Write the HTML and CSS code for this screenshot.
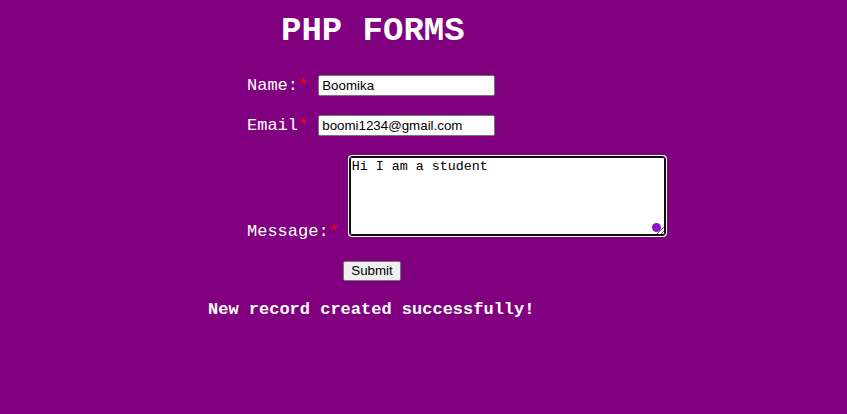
FILE: index.html
```html
<!DOCTYPE html>
<html>
<head>
<meta charset="utf-8">
<link rel="stylesheet" href="styles.css">
</head>
<body>
<div class="page">
  <h1 class="title">PHP FORMS</h1>
  <form class="form">
    <div class="row">
      <label class="label">Name:<span class="req">*</span></label>
      <input class="field" type="text" value="Boomika">
    </div>
    <div class="row">
      <label class="label">Email<span class="req">*</span></label>
      <input class="field" type="text" value="boomi1234@gmail.com">
    </div>
    <div class="row row-end">
      <label class="label label-msg">Message:<span class="req">*</span></label>
      <span class="area-wrap">
        <textarea class="area">Hi I am a student</textarea>
        <span class="dot"></span>
      </span>
    </div>
    <div class="row row-btn">
      <button class="btn" type="button">Submit</button>
    </div>
  </form>
  <p class="success">New record created successfully!</p>
</div>
</body>
</html>
```

FILE: styles.css
```css
html, body {
  margin: 0;
  padding: 0;
}
body {
  background: #800080;
  font-family: "Liberation Mono", "Courier New", monospace;
  color: #fff;
  width: 847px;
  height: 414px;
  overflow: hidden;
}
.page {
  padding-left: 208px;
  padding-top: 11px;
}
.title {
  margin: 0 0 0 73px;
  font-size: 34px;
  line-height: 40px;
  font-weight: bold;
  color: #fff;
}
.form {
  margin: 24px 0 0 39px;
}
.row {
  display: flex;
  align-items: center;
  gap: 10px;
  margin-bottom: 19px;
}
.row-end {
  align-items: flex-end;
  margin-bottom: 25px;
}
.label {
  font-size: 17px;
  line-height: 21px;
  color: #fff;
}
.label-msg {
  line-height: 19px;
  margin-bottom: -5px;
}
.req {
  color: #ff0000;
}
.field {
  box-sizing: border-box;
  width: 177px;
  height: 21px;
  margin: 0;
  padding: 1px 3px;
  border: 1px solid #767676;
  border-radius: 2px;
  background: #fff;
  color: #000;
  font-family: "Liberation Sans", Arial, sans-serif;
  font-size: 13.33px;
}
.area-wrap {
  position: relative;
  display: block;
  margin-top: 1px;
}
.area {
  display: block;
  box-sizing: border-box;
  width: 317px;
  height: 80px;
  margin: 0;
  padding: 2px;
  border: 1px solid #101010;
  border-radius: 3px;
  box-shadow: inset 0 0 0 1px #101010, 0 0 0 1px #fff;
  background: #fff;
  color: #000;
  font-family: "Liberation Mono", monospace;
  font-size: 13.33px;
  line-height: 15px;
  outline: none;
}
.dot {
  position: absolute;
  left: 303px;
  top: 67px;
  width: 9px;
  height: 9px;
  border-radius: 50%;
  background: #8a14c8;
}
.row-btn {
  margin: 0 0 0 96px;
}
.btn {
  box-sizing: border-box;
  width: 58px;
  height: 20px;
  margin: 0;
  padding: 1px 6px;
  border: 1px solid #767676;
  border-radius: 2px;
  background: #efefef;
  color: #000;
  font-family: "Liberation Sans", Arial, sans-serif;
  font-size: 13.33px;
  line-height: 16px;
}
.success {
  margin: 19px 0 0 0;
  font-size: 17px;
  line-height: 20px;
  font-weight: bold;
  color: #fff;
}
```
